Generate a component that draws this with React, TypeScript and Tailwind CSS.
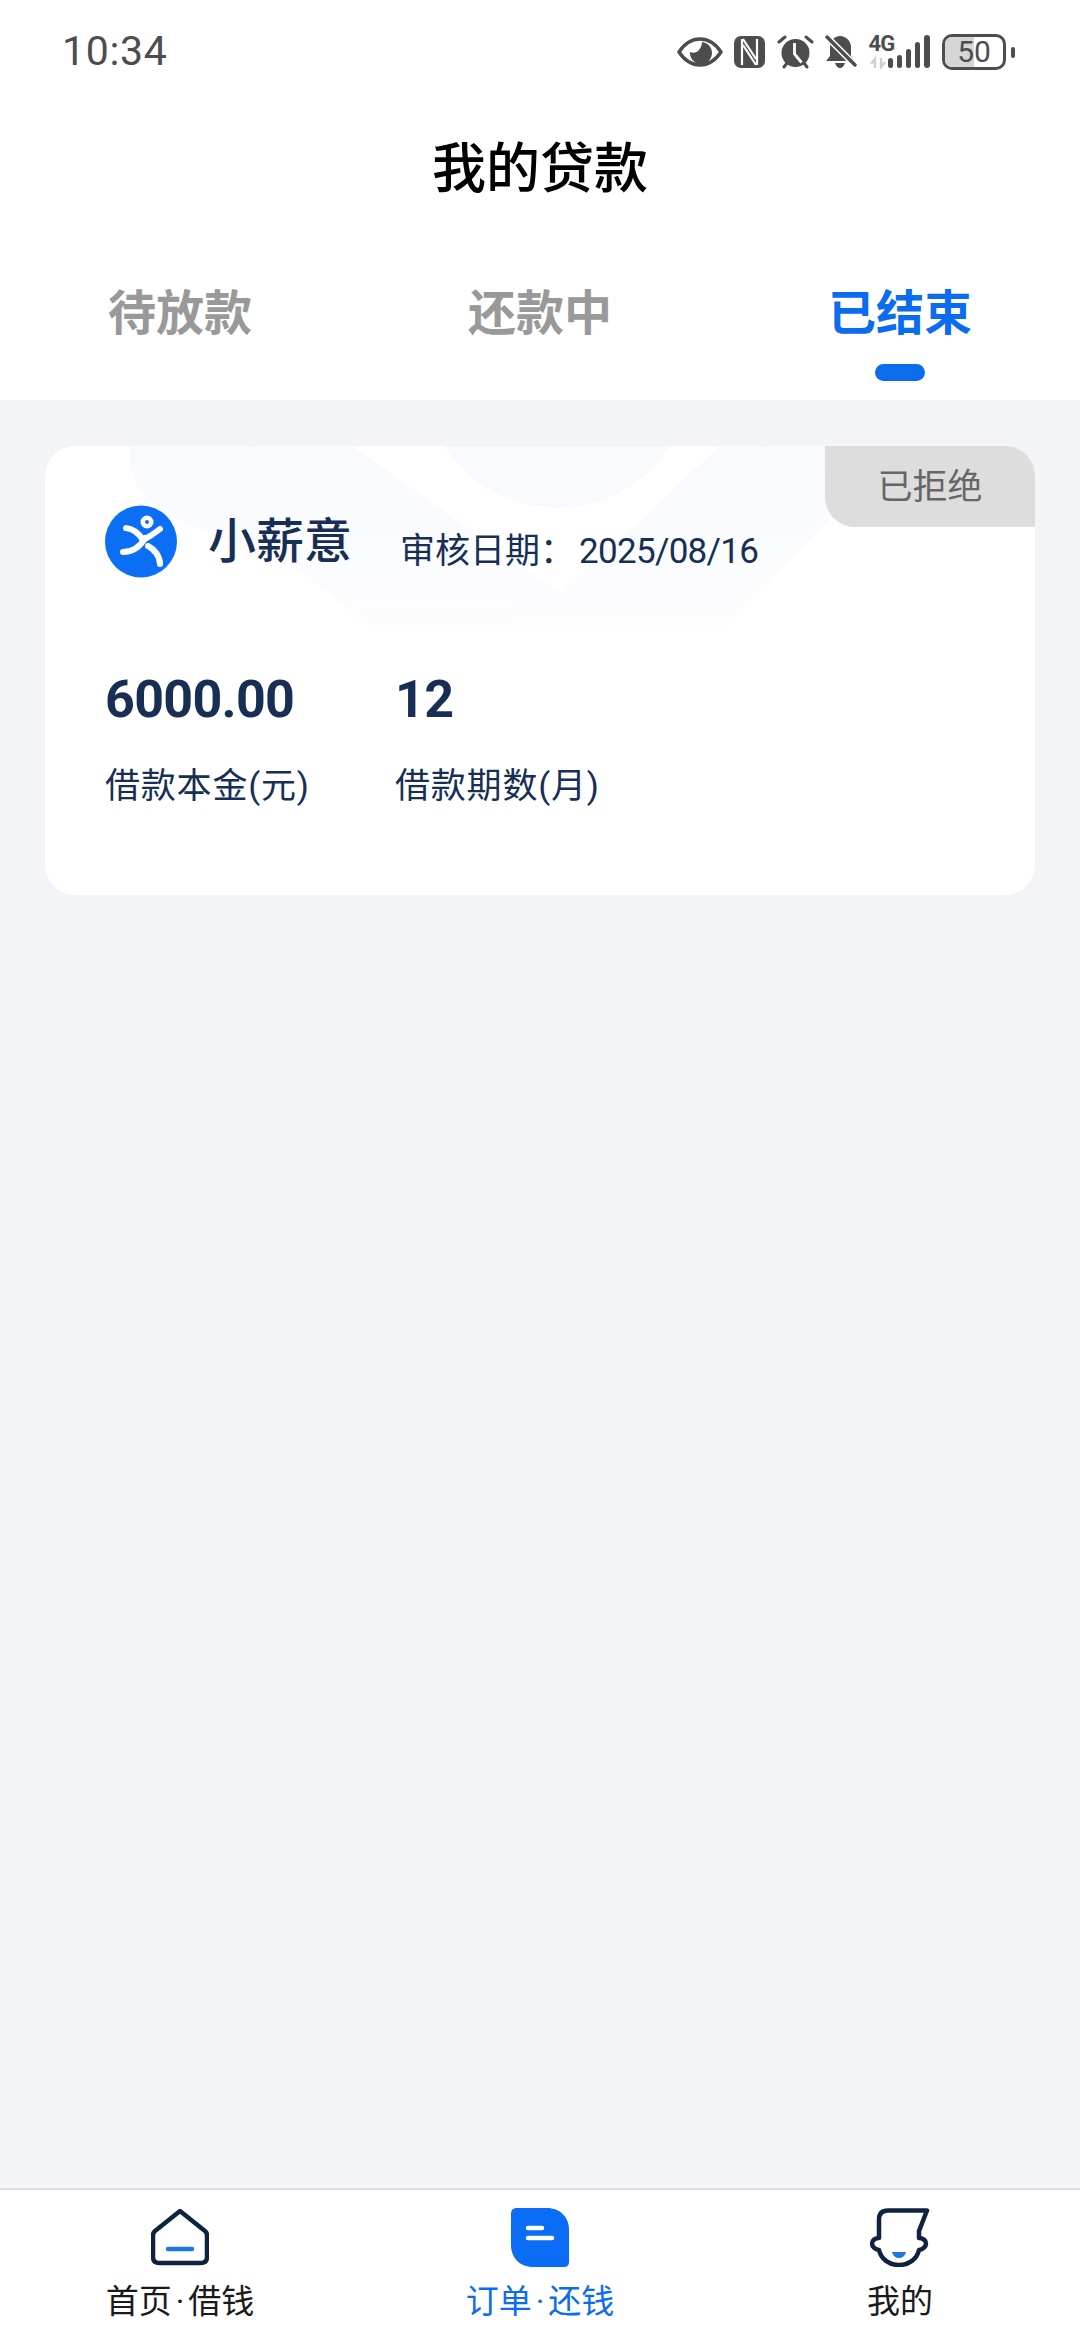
import type { ReactNode } from "react";

const sans = "font-['Roboto','Noto_Sans_CJK_SC',sans-serif]";

function StatusIcons() {
  return (
    <div className="flex items-center gap-[11.5px] text-[#4d4d4d]">
      <svg width="46" height="32" viewBox="0 0 46 32">
        <path d="M2 16C8 7 15 3 23 3s15 4 21 13c-6 9-13 13-21 13S8 25 2 16Z" fill="none" stroke="currentColor" strokeWidth="3.500" strokeLinejoin="round" />
        <path d="M25 6a11 11 0 1 1-12 10c2 1 6 1 8-1s4-5 4-9Z" fill="currentColor" />
      </svg>
      <svg width="31" height="32" viewBox="0 0 31 32">
        <rect x="0" y="0" width="31" height="32" rx="7" fill="currentColor" />
        <path d="M8 3v26M23 3v26M9 3l13 20M9 9l13 20" fill="none" stroke="#fff" strokeWidth="2.200" />
      </svg>
      <svg width="37" height="34" viewBox="0 0 37 34">
        <circle cx="18.500" cy="18" r="14" fill="currentColor" />
        <path d="M2 7l6-5M35 7l-6-5M7 32l3-4M30 32l-3-4" stroke="currentColor" strokeWidth="3" strokeLinecap="round" />
        <path d="M17.500 8v11l7 8.500" fill="none" stroke="#fff" strokeWidth="2.800" />
      </svg>
      <svg width="32" height="34" viewBox="0 0 32 34">
        <path d="M15 1c6 0 11 5 11 11v9l4 5H1l4-5v-9C5 6 9 1 15 1Z" fill="currentColor" />
        <path d="M10 28h10c-1 3-3 5-5 5s-4-2-5-5Z" fill="currentColor" />
        <path d="M2 2l29 29" stroke="#fff" strokeWidth="6.500" />
        <path d="M2 2l28 28" stroke="currentColor" strokeWidth="3.400" strokeLinecap="round" />
      </svg>
      <div className="relative h-[34px] w-[62px]">
        <span className="absolute left-0 top-[-3px] font-['Roboto',sans-serif] text-[22px] leading-[24px] font-bold tracking-[-0.8px]">4G</span>
        <svg className="absolute left-0 top-0" width="62" height="34" viewBox="0 0 62 34">
          <path d="M6 33V24l-4 5M12 23v9l4-5" stroke="#cfcfcf" strokeWidth="2.400" fill="none" />
          <rect x="19" y="23" width="5" height="10" rx="2.500" fill="currentColor" />
          <rect x="28" y="20" width="5" height="13" rx="2.500" fill="currentColor" />
          <rect x="37" y="14" width="5" height="19" rx="2.500" fill="currentColor" />
          <rect x="46" y="7" width="5" height="26" rx="2.500" fill="currentColor" />
          <rect x="55" y="0" width="6" height="33" rx="3" fill="currentColor" />
        </svg>
      </div>
      <div className="flex items-center gap-[5px]">
        <div className="relative flex h-[36px] w-[64px] items-center justify-center overflow-hidden rounded-[10px] border-[3px] border-[#4d4d4d]">
          <div className="absolute inset-y-0 left-0 w-[29px] bg-[#d6d6d6]" />
          <span className="relative font-['Roboto',sans-serif] text-[30px] leading-none text-[#4d4d4d]">50</span>
        </div>
        <div className="h-[11px] w-[4px] rounded-full bg-[#4d4d4d]" />
      </div>
    </div>
  );
}

function Tab({ label, active }: { label: string; active?: boolean }) {
  return (
    <div className="relative flex flex-1 justify-center pb-[52px]">
      <span className={`text-[48px] leading-[68px] font-bold ${active ? "text-[#0b6cf0]" : "text-[#999999]"}`}>{label}</span>
      {active && <div className="absolute bottom-[19px] h-[17px] w-[50px] rounded-full bg-[#0b6cf0]" />}
    </div>
  );
}

function Logo() {
  return (
    <svg width="72" height="73" viewBox="0 0 72 73" className="shrink-0">
      <circle cx="36" cy="36.500" r="36" fill="#0b6ff5" />
      <circle cx="42" cy="17" r="6.500" fill="#fff" />
      <circle cx="42" cy="17" r="2" fill="#0b6ff5" />
      <path d="M21 23c8 1 14 7 17 12 6-3 12-7 17-11" fill="none" stroke="#fff" strokeWidth="6" strokeLinecap="round" />
      <path d="M18 47c9 0 17-5 22-14M43 41c6 3 12 10 12 18" fill="none" stroke="#fff" strokeWidth="6" strokeLinecap="round" />
    </svg>
  );
}

function Stat({ value, label, width }: { value: string; label: string; width: string }) {
  return (
    <div className={width}>
      <div className="font-['Roboto',sans-serif] text-[52px] leading-[60px] font-bold tracking-[-0.7px] text-[#172f55]">{value}</div>
      <div className="mt-[32px] text-[35px] leading-[50px] tracking-[0.8px] text-[#172f55]">{label}</div>
    </div>
  );
}

function NavItem({ left, right, active, children }: { left: string; right?: string; active?: boolean; children: ReactNode }) {
  return (
    <div className="flex flex-1 flex-col items-center">
      <div className="flex h-[60px] items-center justify-center">{children}</div>
      <span className={`mt-[11px] text-[33px] leading-[48px] ${active ? "text-[#0b6cf0]" : "text-[#1a1a1a]"}`}>
        {left}
        {right && <span className="mx-[4px]">·</span>}
        {right}
      </span>
    </div>
  );
}

export default function App() {
  return (
    <div className={`flex h-[2340px] w-[1080px] flex-col bg-[#f2f4f8] ${sans}`}>
      <header className="bg-white">
        <div className="flex h-[104px] items-center justify-between pl-[62px] pr-[65px]">
          <span className="text-[41px] tracking-[0.7px] text-[#4d4d4d]">10:34</span>
          <StatusIcons />
        </div>
        <h1 className="pt-[26px] text-center text-[54px] leading-[80px] font-medium text-black">我的贷款</h1>
        <div className="mt-[70px] flex">
          <Tab label="待放款" />
          <Tab label="还款中" />
          <Tab label="已结束" active />
        </div>
      </header>

      <main className="flex-1 px-[45px] pt-[46px]">
        <section className="relative h-[449px] overflow-hidden rounded-[30px] bg-white">
          <svg className="absolute left-0 top-0" width="990" height="200" viewBox="0 0 990 200">
            <defs>
              <linearGradient id="wm" x1="0" y1="0" x2="0" y2="1">
                <stop offset="0" stopColor="#f8fafe" />
                <stop offset="1" stopColor="#fdfdfe" />
              </linearGradient>
            </defs>
            <path d="M84 0C84 40 100 60 135 75L258 127 331 187H671L830 30V0Z" fill="url(#wm)" />
            <path d="M307 0 516 147 675 0Z" fill="#ffffff" />
            <circle cx="512" cy="-72" r="134" fill="#f8fafe" />
          </svg>
          <div className="absolute right-0 top-0 flex h-[81px] w-[210px] items-center justify-center rounded-bl-[30px] bg-[#dddddd] pt-[3px] text-[35px] text-[#666666]">已拒绝</div>
          <div className="relative px-[60px] pt-[59px]">
            <div className="flex items-center">
              <Logo />
              <span className="ml-[31px] text-[48px] leading-[72px] font-medium text-[#172f55]">小薪意</span>
              <span className="ml-[48px] mt-[20px] text-[35px] leading-[50px] text-[#172f55]">
                审核日期：<span className="ml-[4px] tracking-[-0.7px]">2025/08/16</span>
              </span>
            </div>
            <div className="mt-[92px] flex">
              <Stat value="6000.00" label="借款本金(元)" width="w-[290px]" />
              <Stat value="12" label="借款期数(月)" width="w-[300px]" />
            </div>
          </div>
        </section>
      </main>

      <nav className="h-[152px] border-t-2 border-[#dddddd] bg-white pt-[17px]">
        <div className="flex">
          <NavItem left="首页" right="借钱">
            <svg width="58" height="58" viewBox="0 0 58 58" fill="none">
              <path d="M29 3 54 23c1.500 1.200 2 2.500 2 4.500V49c0 4-2 6-6 6H8c-4 0-6-2-6-6V27.500c0-2 .5-3.300 2-4.500Z" stroke="#0f2340" strokeWidth="4.500" strokeLinejoin="round" />
              <path d="M17 41h24" stroke="#1f74e8" strokeWidth="4.500" strokeLinecap="round" />
            </svg>
          </NavItem>
          <NavItem left="订单" right="还钱" active>
            <svg width="58" height="59" viewBox="0 0 58 59">
              <path d="M6 0h30c13 0 22 9 22 22v32c0 3-2 5-5 5H22C9 59 0 50 0 37V6c0-4 2-6 6-6Z" fill="#0b6cf5" />
              <path d="M17 20h14M17 30h24" stroke="#fff" strokeWidth="4.500" strokeLinecap="round" />
            </svg>
          </NavItem>
          <NavItem left="我的">
            <svg width="62" height="60" viewBox="0 0 62 60" fill="none">
              <path d="M58 3.500H19c-6 0-9 3-9 9V31c-4 0-7 2.500-7 5.500s3 6 7 6.500c2 9 10 15 20 15s18-6 20-15c4-.5 7-3.500 7-6.500s-3-5.500-7-5.500V24Z" stroke="#0f2340" strokeWidth="4.500" strokeLinejoin="round" />
              <path d="M23 45h14c-1 4-3.500 6-7 6s-6-2-7-6Z" fill="#1f74e8" />
            </svg>
          </NavItem>
        </div>
      </nav>
    </div>
  );
}
